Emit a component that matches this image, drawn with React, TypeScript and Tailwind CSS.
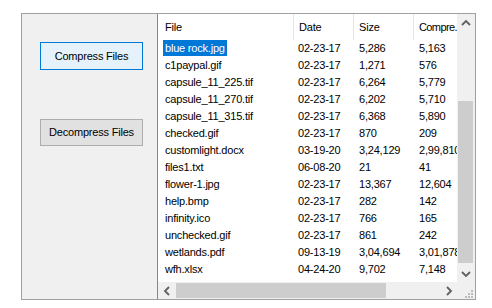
import React from "react";

type Row = {
  file: string;
  date: string;
  size: string;
  compressed: string;
};

const rows: Row[] = [
  { file: "blue rock.jpg", date: "02-23-17", size: "5,286", compressed: "5,163" },
  { file: "c1paypal.gif", date: "02-23-17", size: "1,271", compressed: "576" },
  { file: "capsule_11_225.tif", date: "02-23-17", size: "6,264", compressed: "5,779" },
  { file: "capsule_11_270.tif", date: "02-23-17", size: "6,202", compressed: "5,710" },
  { file: "capsule_11_315.tif", date: "02-23-17", size: "6,368", compressed: "5,890" },
  { file: "checked.gif", date: "02-23-17", size: "870", compressed: "209" },
  { file: "customlight.docx", date: "03-19-20", size: "3,24,129", compressed: "2,99,810" },
  { file: "files1.txt", date: "06-08-20", size: "21", compressed: "41" },
  { file: "flower-1.jpg", date: "02-23-17", size: "13,367", compressed: "12,604" },
  { file: "help.bmp", date: "02-23-17", size: "282", compressed: "142" },
  { file: "infinity.ico", date: "02-23-17", size: "766", compressed: "165" },
  { file: "unchecked.gif", date: "02-23-17", size: "861", compressed: "242" },
  { file: "wetlands.pdf", date: "09-13-19", size: "3,04,694", compressed: "3,01,878" },
  { file: "wfh.xlsx", date: "04-24-20", size: "9,702", compressed: "7,148" },
];

// little chevrons for the scroll bar buttons
const Chevron = ({ dir }: { dir: "up" | "down" | "left" | "right" }) => {
  const d = {
    up: "M1 6 L5 2 L9 6",
    down: "M1 2 L5 6 L9 2",
    left: "M6 1 L2 5 L6 9",
    right: "M2 1 L6 5 L2 9",
  }[dir];
  const vertical = dir === "up" || dir === "down";
  return (
    <svg
      width={vertical ? 10 : 8}
      height={vertical ? 8 : 10}
      viewBox={vertical ? "0 0 10 8" : "0 0 8 10"}
    >
      <path d={d} fill="none" stroke="#606060" strokeWidth="1.8" />
    </svg>
  );
};

const SizeGrip = () => (
  <svg width="12" height="12" viewBox="0 0 12 12">
    {[
      [9, 3],
      [6, 6],
      [9, 6],
      [3, 9],
      [6, 9],
      [9, 9],
    ].map(([x, y], i) => (
      <rect key={i} x={x} y={y} width="2" height="2" fill="#bcbcbc" />
    ))}
  </svg>
);

export default function App() {
  return (
    <div
      className="w-[492px] h-[308px] bg-white pt-[13px] pl-[21px] text-[11px] tracking-[-0.2px] text-black"
      style={{ fontFamily: '"Liberation Sans", Arial, sans-serif' }}
    >
      <div className="w-[455px] h-[287px] border border-[#a0a0a0] bg-[#f0f0f0] flex">
        {/* 버튼 영역 */}
        <div className="w-[135px] flex flex-col pl-[18px] pt-[28px]">
          <button className="w-[103px] h-[28px] border border-[#0078d7] bg-[#e5f1fb] text-[11px] tracking-[-0.2px]">
            Compress Files
          </button>
          <button className="w-[103px] h-[27px] mt-[49px] border border-[#adadad] bg-[#e1e1e1] text-[11px] tracking-[-0.2px]">
            Decompress Files
          </button>
        </div>

        {/* 리스트 뷰 */}
        <div className="flex-1 border-l border-[#828790] flex flex-col">
          <div className="flex h-[268px]">
            <div className="w-[299px] bg-white overflow-hidden">
              <div className="flex h-[26px] items-center whitespace-nowrap">
                <div className="w-[135px] shrink-0 pl-[7px]">File</div>
                <div className="w-[60px] shrink-0 h-full flex items-center pl-[5px] border-l border-[#e5e5e5]">
                  Date
                </div>
                <div className="w-[60px] shrink-0 h-full flex items-center pl-[5px] border-l border-[#e5e5e5]">
                  Size
                </div>
                <div className="w-[44px] shrink-0 h-full flex items-center pl-[5px] border-l border-[#e5e5e5] tracking-[-0.6px]">
                  Compre.
                </div>
              </div>
              {rows.map((r, i) => (
                <div key={r.file} className="flex h-[17px] items-center whitespace-nowrap">
                  <div className="w-[135px] shrink-0 pl-[5px]">
                    <span
                      className={
                        i === 0
                          ? "px-[2px] py-[2px] bg-[#0078d7] text-white"
                          : "px-[2px]"
                      }
                    >
                      {r.file}
                    </span>
                  </div>
                  <div className="w-[60px] shrink-0 pl-[5px]">{r.date}</div>
                  <div className="w-[60px] shrink-0 pl-[6px]">{r.size}</div>
                  <div className="w-[44px] shrink-0 pl-[6px] overflow-hidden">
                    {r.compressed}
                  </div>
                </div>
              ))}
            </div>
            {/* vertical scroll bar */}
            <div className="w-[17px] bg-[#f0f0f0] flex flex-col items-center">
              <div className="h-[17px] flex items-center justify-center">
                <Chevron dir="up" />
              </div>
              <div className="w-[15px] flex-1 flex flex-col">
                <div className="h-[70px]" />
                <div className="h-[162px] bg-[#cdcdcd]" />
              </div>
              <div className="h-[17px] flex items-center justify-center">
                <Chevron dir="down" />
              </div>
            </div>
          </div>
          {/* horizontal scroll bar */}
          <div className="h-[17px] flex bg-[#f0f0f0]">
            <div className="w-[299px] flex items-center">
              <div className="w-[17px] h-full flex items-center justify-center">
                <Chevron dir="left" />
              </div>
              <div className="w-[210px] h-[15px] bg-[#cdcdcd] ml-[1px]" />
              <div className="flex-1" />
              <div className="w-[17px] h-full flex items-center justify-center">
                <Chevron dir="right" />
              </div>
            </div>
            <div className="w-[17px] h-full flex items-end justify-end">
              <SizeGrip />
            </div>
          </div>
        </div>
      </div>
    </div>
  );
}
